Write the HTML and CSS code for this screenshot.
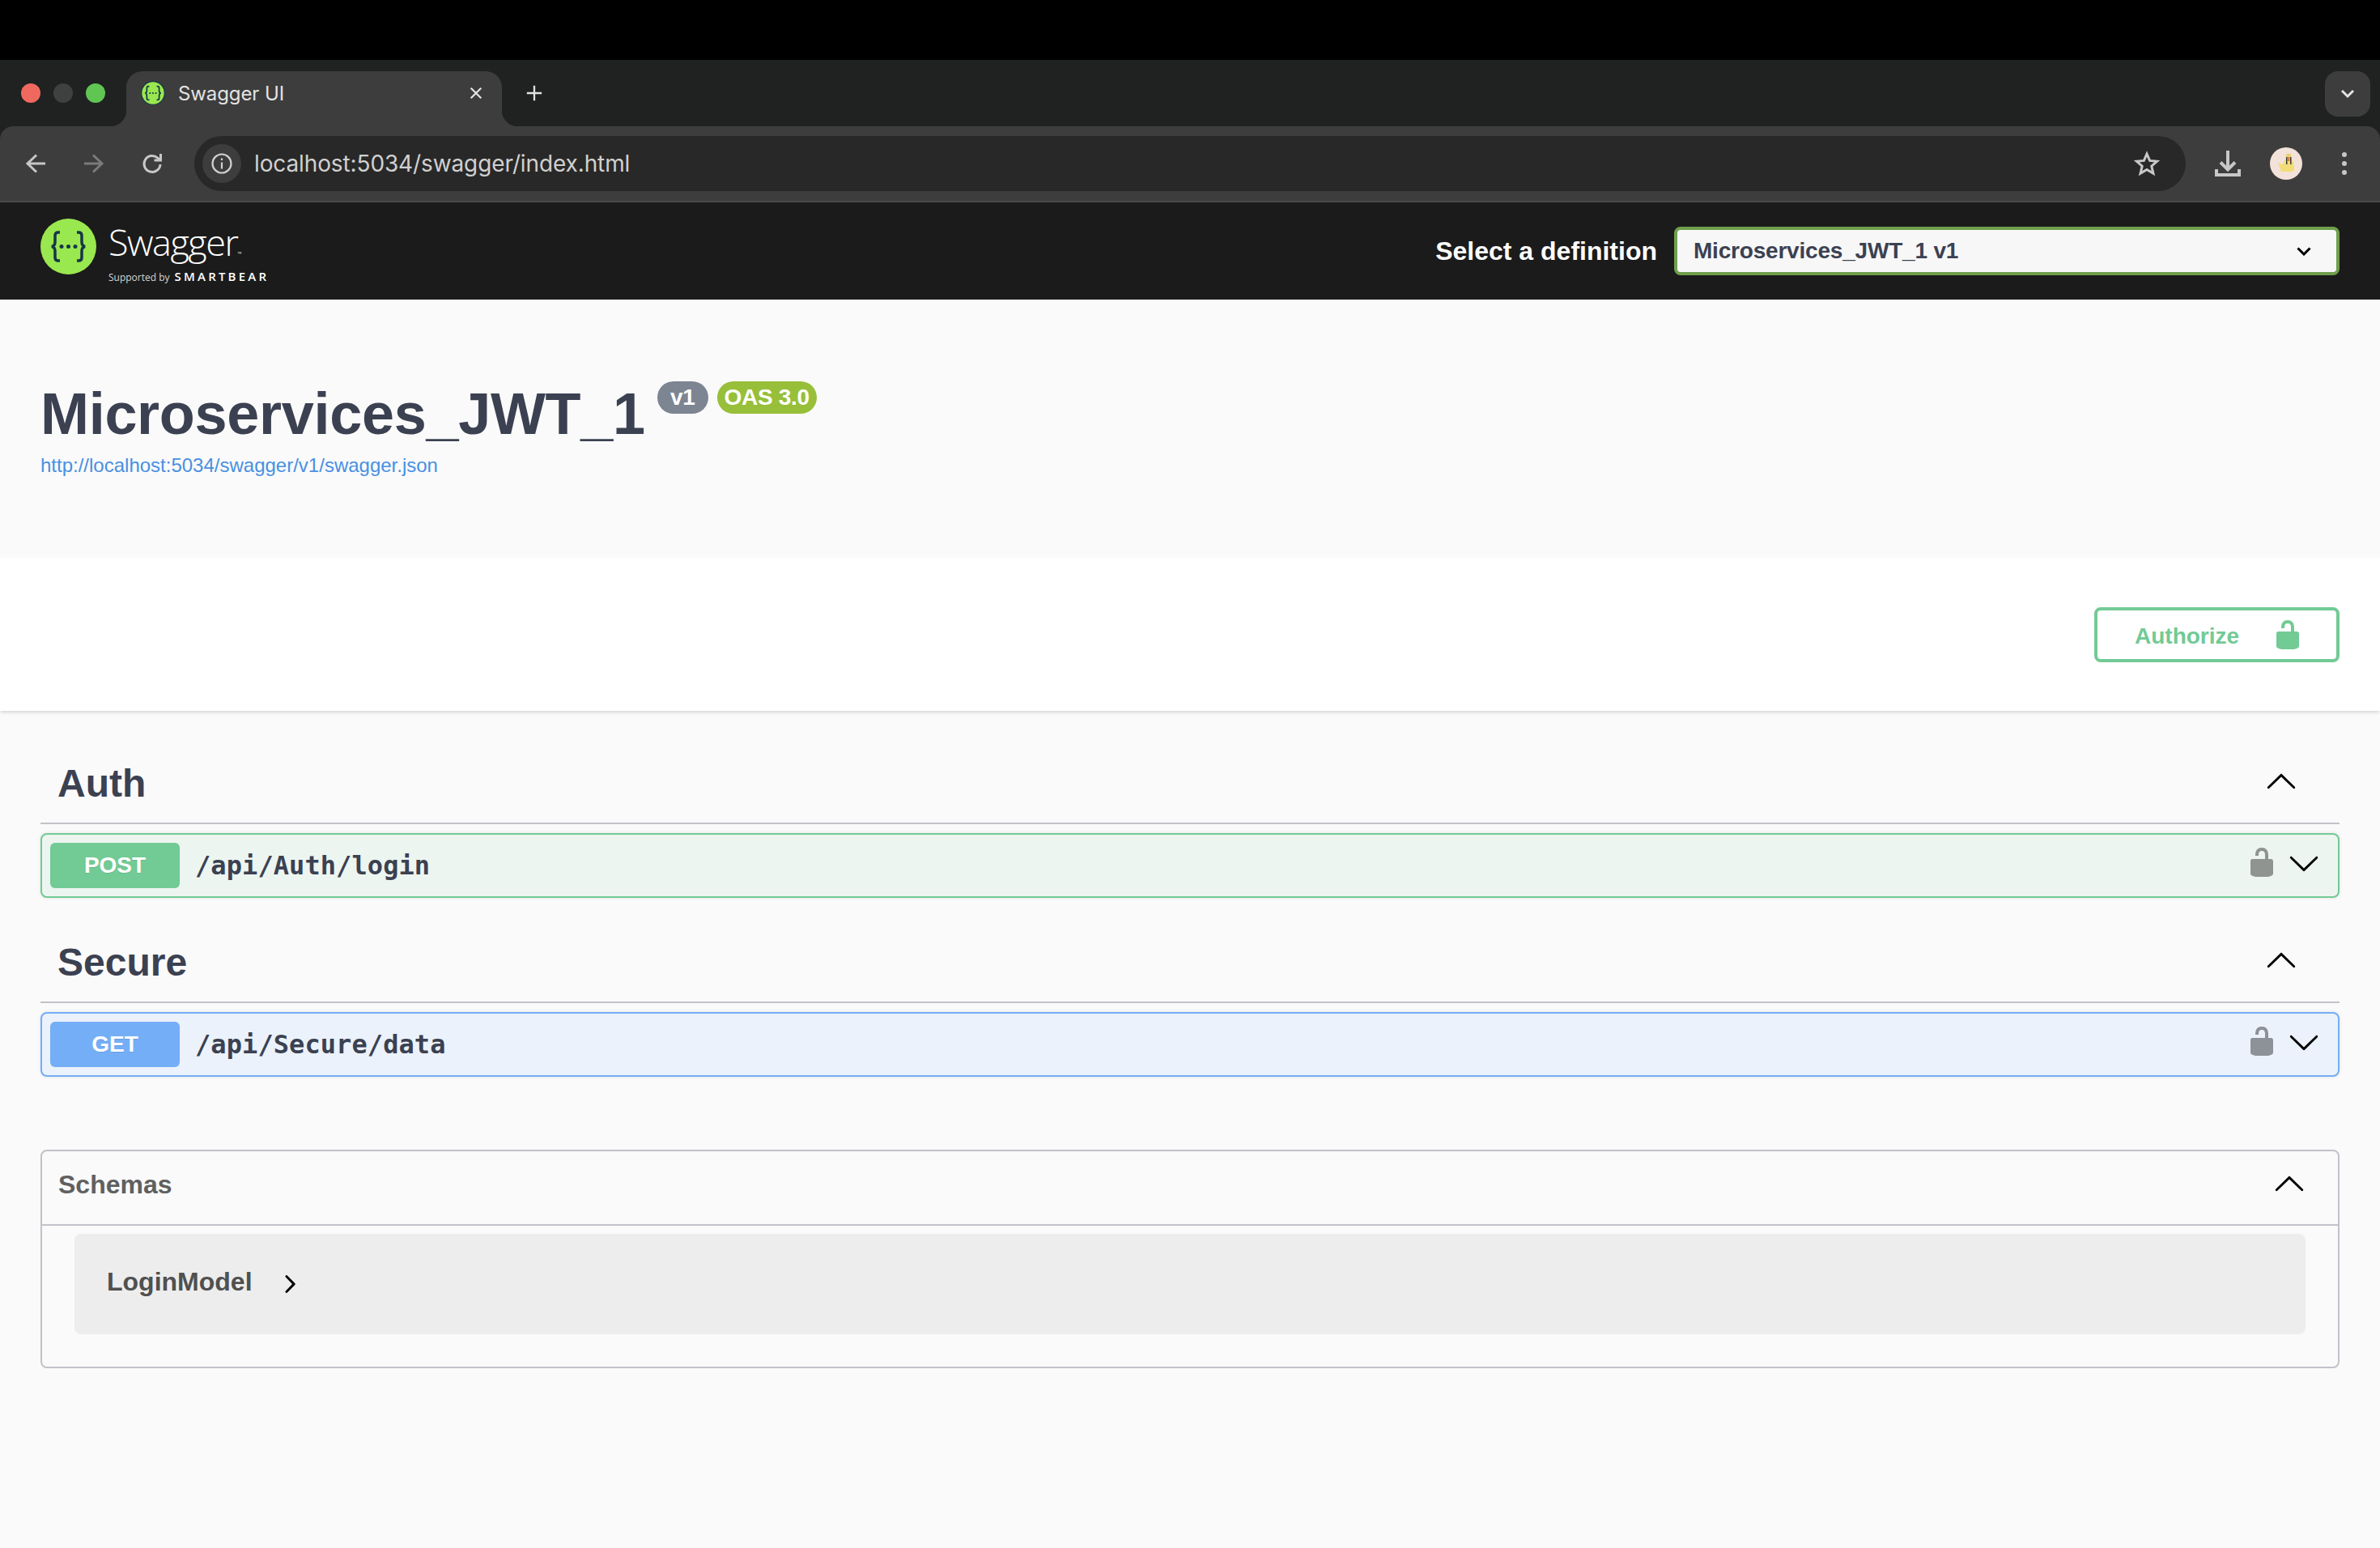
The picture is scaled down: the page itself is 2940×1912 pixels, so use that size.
FILE: index.html
```html
<!DOCTYPE html>
<html lang="en">
<head>
    <meta charset="UTF-8">
    <title>Swagger UI</title>
    <link rel="stylesheet" href="styles.css">
</head>
<body>
    <div class="screen-top"></div>

    <div class="tabstrip">
        <div class="lights">
            <span class="light red"></span>
            <span class="light gray"></span>
            <span class="light green"></span>
        </div>
        <div class="tab">
            <svg class="favicon" viewBox="0 0 69 69">
                <circle cx="34.5" cy="34.5" r="33" fill="#9ae84f" stroke="#173647" stroke-width="3"/>
                <path class="brace" d="M24 15h-3c-3 0-4 2-4 5v8c0 3-2 6-5 6.500 3 .5 5 3.500 5 6.500v8c0 3 1 5 4 5h3"/>
                <path class="brace" d="M45 15h3c3 0 4 2 4 5v8c0 3 2 6 5 6.500-3 .5-5 3.500-5 6.500v8c0 3-1 5-4 5h-3"/>
                <circle cx="26" cy="34.500" r="2.500" fill="#173647"/>
                <circle cx="34.500" cy="34.500" r="2.500" fill="#173647"/>
                <circle cx="43" cy="34.500" r="2.500" fill="#173647"/>
            </svg>
            <span class="tab-title">Swagger UI</span>
            <svg class="tab-close" viewBox="0 0 20 20"><path d="M3 3l14 14M17 3L3 17"/></svg>
        </div>
        <svg class="new-tab" viewBox="0 0 24 24"><path d="M12 2v20M2 12h20"/></svg>
        <div class="tab-menu">
            <svg viewBox="0 0 18 12"><path d="M2 2l7 7 7-7"/></svg>
        </div>
    </div>

    <div class="toolbar-wrap">
        <div class="toolbar">
            <svg class="nav-icon" viewBox="0 0 24 24"><path d="M24 12H2M13 1.500L2 12l11 10.500"/></svg>
            <svg class="nav-icon dim" viewBox="0 0 24 24"><path d="M0 12h22M11 1.500L22 12 11 22.500"/></svg>
            <svg class="nav-icon reload" viewBox="0 0 24 24"><path d="M22 13a10 10 0 1 1-3.500-8.200L22 8"/><path class="fill" d="M14.500 9.500H24V0h-3v6.500h-6.500z"/></svg>
            <div class="address">
                <span class="site-info">
                    <svg viewBox="0 0 28 28"><circle cx="14" cy="14" r="11.500"/><path d="M14 12.500v8M14 7.500v2.500"/></svg>
                </span>
                <span class="url">localhost:5034/swagger/index.html</span>
                <svg class="star" viewBox="0 0 32 32"><path d="M16 4l3.600 8.400 9.100.8-6.900 6 2.100 8.900-7.900-4.700-7.900 4.700 2.100-8.900-6.900-6 9.100-.8z"/></svg>
            </div>
            <svg class="download" viewBox="0 0 32 32"><path d="M16 0v23M7 14.500l9 9 9-9M2 23v7h28v-7"/></svg>
            <svg class="avatar" viewBox="0 0 40 40">
                <circle cx="20" cy="20" r="20" fill="#f3e2da"/>
                <path d="M10 19l6 2 3-7 7 0 3 4 1.500 9-2.500 3-14 0z" fill="#f2dc78"/>
                <circle cx="23" cy="11" r="3.500" fill="#e9d173"/>
                <path d="M20 12h1.500v9H20zM25 12h1.500v9H25z" fill="#3a3a3a"/>
                <rect x="22" y="12" width="2.500" height="5" fill="#d9843f"/>
            </svg>
            <svg class="more" viewBox="0 0 6 30">
                <circle cx="3" cy="4" r="3"/><circle cx="3" cy="15" r="3"/><circle cx="3" cy="26" r="3"/>
            </svg>
        </div>
    </div>

    <header class="swagger-bar">
        <div class="logo">
            <svg class="logo-mark" viewBox="0 0 69 69">
                <circle cx="34.5" cy="34.500" r="34.500" fill="#9ae84f"/>
                <path class="brace thin" d="M24 17h-2c-3 0-4 2-4 4v8c0 3-2 5-4 5.500 2 .5 4 2.500 4 5.500v8c0 2 1 4 4 4h2"/>
                <path class="brace thin" d="M45 17h2c3 0 4 2 4 4v8c0 3 2 5 4 5.500-2 .5-4 2.500-4 5.500v8c0 2-1 4-4 4h-2"/>
                <circle cx="26" cy="34.500" r="2.500" fill="#173647"/>
                <circle cx="34.500" cy="34.500" r="2.500" fill="#173647"/>
                <circle cx="43" cy="34.500" r="2.500" fill="#173647"/>
            </svg>
            <div class="logo-text">
                <div class="logo-name">Swagger<span class="logo-tm">™</span></div>
                <div class="logo-sub"><span class="supported">Supported by</span><span class="smartbear">SMARTBEAR</span></div>
            </div>
        </div>
        <div class="definition">
            <span class="definition-label">Select a definition</span>
            <div class="definition-select">
                <span>Microservices_JWT_1 v1</span>
                <svg viewBox="0 0 18 11"><path d="M1.500 1.500L9 9l7.500-7.500"/></svg>
            </div>
        </div>
    </header>

    <section class="info">
        <div class="title-row">
            <h1>Microservices_JWT_1</h1>
            <span class="badge version">v1</span>
            <span class="badge oas">OAS 3.0</span>
        </div>
        <a class="spec-link" href="#">http://localhost:5034/swagger/v1/swagger.json</a>
    </section>

    <section class="scheme">
        <button class="authorize">
            <span>Authorize</span>
            <svg viewBox="0 0 20 20"><path d="M15.800 8H14V5.600C14 2.703 12.665 1 10 1 7.334 1 6 2.703 6 5.600V6h2v-.801C8 3.754 8.797 3 10 3c1.203 0 2 .754 2 2.199V8H4c-.553 0-1 .646-1 1.199V17c0 .549.428 1.139.951 1.307l1.197.387C5.672 18.861 6.550 19 7.100 19h5.800c.549 0 1.428-.139 1.951-.307l1.196-.387c.524-.167.953-.757.953-1.306V9.199C17 8.646 16.352 8 15.800 8z"/></svg>
        </button>
    </section>

    <main class="content">
        <div class="tag-head">
            <h2>Auth</h2>
            <svg class="arrow up" viewBox="0 0 20 20"><path d="M17.418 6.109c.272-.268.709-.268.979 0s.271.701 0 .969l-7.908 7.830c-.270.268-.707.268-.979 0l-7.908-7.830c-.270-.268-.270-.701 0-.969.271-.268.709-.268.979 0L10 13.250l7.418-7.141z"/></svg>
        </div>
        <div class="opblock post">
            <span class="method">POST</span>
            <span class="path">/api/Auth/login</span>
            <svg class="op-lock" viewBox="0 0 20 20"><path d="M15.800 8H14V5.600C14 2.703 12.665 1 10 1 7.334 1 6 2.703 6 5.600V6h2v-.801C8 3.754 8.797 3 10 3c1.203 0 2 .754 2 2.199V8H4c-.553 0-1 .646-1 1.199V17c0 .549.428 1.139.951 1.307l1.197.387C5.672 18.861 6.550 19 7.100 19h5.800c.549 0 1.428-.139 1.951-.307l1.196-.387c.524-.167.953-.757.953-1.306V9.199C17 8.646 16.352 8 15.800 8z"/></svg>
            <svg class="arrow op-arrow" viewBox="0 0 20 20"><path d="M17.418 6.109c.272-.268.709-.268.979 0s.271.701 0 .969l-7.908 7.830c-.270.268-.707.268-.979 0l-7.908-7.830c-.270-.268-.270-.701 0-.969.271-.268.709-.268.979 0L10 13.250l7.418-7.141z"/></svg>
        </div>

        <div class="tag-head second">
            <h2>Secure</h2>
            <svg class="arrow up" viewBox="0 0 20 20"><path d="M17.418 6.109c.272-.268.709-.268.979 0s.271.701 0 .969l-7.908 7.830c-.270.268-.707.268-.979 0l-7.908-7.830c-.270-.268-.270-.701 0-.969.271-.268.709-.268.979 0L10 13.250l7.418-7.141z"/></svg>
        </div>
        <div class="opblock get">
            <span class="method">GET</span>
            <span class="path">/api/Secure/data</span>
            <svg class="op-lock" viewBox="0 0 20 20"><path d="M15.800 8H14V5.600C14 2.703 12.665 1 10 1 7.334 1 6 2.703 6 5.600V6h2v-.801C8 3.754 8.797 3 10 3c1.203 0 2 .754 2 2.199V8H4c-.553 0-1 .646-1 1.199V17c0 .549.428 1.139.951 1.307l1.197.387C5.672 18.861 6.550 19 7.100 19h5.800c.549 0 1.428-.139 1.951-.307l1.196-.387c.524-.167.953-.757.953-1.306V9.199C17 8.646 16.352 8 15.800 8z"/></svg>
            <svg class="arrow op-arrow" viewBox="0 0 20 20"><path d="M17.418 6.109c.272-.268.709-.268.979 0s.271.701 0 .969l-7.908 7.830c-.270.268-.707.268-.979 0l-7.908-7.830c-.270-.268-.270-.701 0-.969.271-.268.709-.268.979 0L10 13.250l7.418-7.141z"/></svg>
        </div>

        <div class="schemas">
            <div class="schemas-head">
                <h4>Schemas</h4>
                <svg class="arrow up" viewBox="0 0 20 20"><path d="M17.418 6.109c.272-.268.709-.268.979 0s.271.701 0 .969l-7.908 7.830c-.270.268-.707.268-.979 0l-7.908-7.830c-.270-.268-.270-.701 0-.969.271-.268.709-.268.979 0L10 13.250l7.418-7.141z"/></svg>
            </div>
            <div class="model">
                <span class="model-name">LoginModel</span>
                <svg class="model-arrow" viewBox="0 0 20 20"><path d="M13.250 10L6.109 2.580c-.268-.270-.268-.707 0-.979.268-.270.701-.270.969 0l7.830 7.908c.268.271.268.709 0 .979l-7.830 7.908c-.268.271-.701.270-.969 0-.268-.269-.268-.707 0-.979L13.250 10z"/></svg>
            </div>
        </div>
    </main>
</body>
</html>
```

FILE: styles.css
```css
* {
    box-sizing: border-box;
}
body {
    margin: 0;
    min-height: 1912px;
    background: #fafafa;
    font-family: "Liberation Sans", Arial, sans-serif;
    color: #3b4151;
}
h1, h2, h4 {
    margin: 0;
}

/* browser chrome */
.screen-top {
    height: 74px;
    background: #000;
}
.tabstrip {
    height: 82px;
    background: #1f2221;
    display: flex;
    align-items: flex-start;
    font-family: Inter, "Liberation Sans", sans-serif;
}
.lights {
    width: 156px;
    height: 82px;
    padding: 0 0 0 26px;
    display: flex;
    align-items: center;
    gap: 16px;
    flex-shrink: 0;
}
.light {
    width: 24px;
    height: 24px;
    border-radius: 50%;
}
.red { background: #f0695f; }
.gray { background: #3f4140; }
.green { background: #61c554; }
.tab {
    position: relative;
    margin-top: 14px;
    width: 464px;
    height: 68px;
    background: #3d3d3d;
    border-radius: 20px 20px 0 0;
    display: flex;
    align-items: center;
    padding: 0 22px 14px 18px;
    flex-shrink: 0;
}
.tab::before, .tab::after {
    content: "";
    position: absolute;
    bottom: 0;
    width: 20px;
    height: 20px;
}
.tab::before {
    left: -20px;
    background: radial-gradient(circle at 0 0, transparent 20px, #3d3d3d 20.500px);
}
.tab::after {
    right: -20px;
    background: radial-gradient(circle at 100% 0, transparent 20px, #3d3d3d 20.500px);
}
.favicon {
    width: 30px;
    height: 30px;
    flex-shrink: 0;
}
.brace {
    fill: none;
    stroke: #173647;
    stroke-width: 4;
}
.brace.thin {
    stroke-width: 3.500;
}
.tab-title {
    margin-left: 16px;
    font-size: 24px;
    letter-spacing: -0.100px;
    color: #e3e3e3;
    flex: 1;
}
.tab-close {
    width: 18px;
    height: 18px;
    margin-right: 1px;
}
.tab-close path, .new-tab path {
    fill: none;
    stroke: #e3e3e3;
    stroke-width: 2.500;
}
.new-tab {
    width: 22px;
    height: 22px;
    margin: 30px 0 0 29px;
}
.tab-menu {
    margin: 14px 12px 0 auto;
    width: 56px;
    height: 56px;
    border-radius: 16px;
    background: #3d3d3d;
    display: flex;
    align-items: center;
    justify-content: center;
}
.tab-menu svg {
    width: 18px;
    height: 12px;
    fill: none;
    stroke: #e3e3e3;
    stroke-width: 3;
}
.toolbar-wrap {
    background: #1f2221;
}
.toolbar {
    height: 94px;
    background: #3d3d3d;
    border-bottom: 2px solid #4a4a4a;
    border-radius: 16px 16px 0 0;
    display: flex;
    align-items: center;
    padding-left: 32px;
    font-family: Inter, "Liberation Sans", sans-serif;
}
.nav-icon {
    width: 24px;
    height: 24px;
    margin-right: 48px;
    fill: none;
    stroke: #c7c7c7;
    stroke-width: 3;
    flex-shrink: 0;
    overflow: visible;
}
.nav-icon.dim {
    stroke: #7b7b7b;
}
.nav-icon.reload {
    margin-right: 0;
}
.nav-icon .fill {
    fill: #c7c7c7;
    stroke: none;
}
.address {
    margin-left: 40px;
    width: 2460px;
    height: 68px;
    background: #282828;
    border-radius: 34px;
    display: flex;
    align-items: center;
    padding-left: 10px;
}
.site-info {
    width: 48px;
    height: 48px;
    border-radius: 50%;
    background: #3d3d3d;
    display: flex;
    align-items: center;
    justify-content: center;
}
.site-info svg {
    width: 28px;
    height: 28px;
    fill: none;
    stroke: #d0d0d0;
    stroke-width: 2.200;
}
.url {
    margin-left: 16px;
    font-size: 28px;
    letter-spacing: -0.120px;
    color: #d0d0d0;
    flex: 1;
}
.star {
    width: 32px;
    height: 32px;
    margin-right: 32px;
    fill: none;
    stroke: #c7c7c7;
    stroke-width: 3;
}
.download {
    width: 32px;
    height: 32px;
    margin-left: 36px;
    fill: none;
    stroke: #c7c7c7;
    stroke-width: 4;
}
.avatar {
    width: 40px;
    height: 40px;
    margin-left: 36px;
}
.more {
    width: 6px;
    height: 30px;
    margin-left: 49px;
    fill: #c7c7c7;
}

/* swagger header */
.swagger-bar {
    height: 120px;
    background: #1b1b1b;
    padding: 0 50px;
    display: flex;
    align-items: center;
    justify-content: space-between;
}
.logo {
    height: 69px;
    margin-bottom: 11px;
    display: flex;
    align-items: flex-start;
    gap: 15px;
}
.logo-mark {
    width: 69px;
    height: 69px;
}
.logo-text {
    color: #fff;
    font-family: "Open Sans", sans-serif;
}
.logo-name {
    font-size: 45px;
    font-weight: 300;
    line-height: 50px;
    letter-spacing: -1.500px;
    margin-top: 4px;
}
.logo-tm {
    font-size: 7px;
    letter-spacing: 0;
    line-height: 0;
}
.logo-sub {
    display: flex;
    align-items: baseline;
    gap: 6px;
    margin-top: 7px;
    line-height: 20px;
}
.supported {
    font-size: 12px;
    color: #d5d5d5;
}
.smartbear {
    font-size: 15px;
    font-weight: 600;
    letter-spacing: 3.200px;
}
.definition {
    display: flex;
    align-items: center;
    gap: 21px;
}
.definition-label {
    font-size: 32px;
    font-weight: bold;
    color: #fff;
}
.definition-select {
    width: 822px;
    height: 60px;
    background: #f7f7f7;
    border: 4px solid #6f9f4b;
    border-radius: 8px;
    display: flex;
    align-items: center;
    justify-content: space-between;
    padding: 0 31px 0 20px;
    font-size: 28px;
    font-weight: bold;
    letter-spacing: -0.200px;
    color: #3b4151;
}
.definition-select svg {
    width: 18px;
    height: 11px;
    fill: none;
    stroke: #000;
    stroke-width: 3;
}

/* info */
.info {
    height: 319px;
    padding: 105px 50px 0;
}
.title-row {
    display: flex;
    align-items: flex-start;
}
h1 {
    font-size: 72px;
    line-height: 72px;
    font-weight: bold;
    letter-spacing: -0.300px;
}
.badge {
    height: 40px;
    margin-top: -4px;
    border-radius: 20px;
    color: #fff;
    font-size: 28px;
    font-weight: bold;
    letter-spacing: -0.300px;
    display: flex;
    align-items: center;
    justify-content: center;
}
.version {
    width: 63px;
    margin-left: 15px;
    background: #7d8492;
}
.oas {
    width: 123px;
    margin-left: 11px;
    background: #97bf3a;
}
.spec-link {
    display: block;
    margin-top: 13px;
    font-size: 24px;
    line-height: 30px;
    color: #4990e2;
    text-decoration: none;
}

/* authorize */
.scheme {
    height: 189px;
    background: #fff;
    box-shadow: 0 3px 4px -1px rgba(0, 0, 0, 0.15);
    padding: 61px 50px 0;
    display: flex;
    justify-content: flex-end;
    align-items: flex-start;
}
.authorize {
    width: 303px;
    height: 68px;
    background: transparent;
    border: 4px solid #72ca95;
    border-radius: 8px;
    color: #72ca95;
    font-family: inherit;
    font-size: 28px;
    font-weight: bold;
    display: flex;
    align-items: center;
    padding: 0 0 0 46px;
}
.authorize span {
    margin-top: 3px;
}
.authorize svg {
    width: 40px;
    height: 40px;
    margin-left: 40px;
    fill: #72ca95;
}

/* operations */
.content {
    padding: 48px 50px 0;
}
.tag-head {
    height: 92px;
    border-bottom: 2px solid #c2c2c9;
    display: flex;
    align-items: center;
    justify-content: space-between;
    padding: 0 52px 10px 21px;
}
.tag-head.second {
    margin-top: 38px;
}
h2 {
    font-size: 48px;
    font-weight: bold;
    line-height: 60px;
    margin-top: 3px;
}
.arrow {
    width: 40px;
    height: 40px;
    fill: #000;
}
.arrow.up {
    transform: rotate(180deg);
}
.tag-head .arrow {
    margin-top: -1px;
}
.opblock {
    margin-top: 11px;
    height: 80px;
    border: 2px solid;
    border-radius: 8px;
    box-shadow: 0 0 4px rgba(0, 0, 0, 0.1);
    display: flex;
    align-items: center;
    padding: 0 22px 0 10px;
}
.post {
    background: #ecf5f0;
    border-color: #72ca95;
}
.get {
    background: #ebf2fb;
    border-color: #74aef6;
}
.method {
    width: 160px;
    height: 56px;
    border-radius: 6px;
    color: #fff;
    font-size: 28px;
    font-weight: bold;
    display: flex;
    align-items: center;
    justify-content: center;
    text-shadow: 0 1px 0 rgba(0, 0, 0, 0.1);
}
.post .method { background: #72ca95; }
.get .method { background: #74aef6; }
.path {
    margin-left: 19px;
    font-family: "DejaVu Sans Mono", monospace;
    font-size: 32px;
    font-weight: bold;
    letter-spacing: 0.080px;
    flex: 1;
}
.op-lock {
    width: 40px;
    height: 40px;
    margin: 0 12px 8px 0;
    fill: #909490;
}
.get .op-lock {
    fill: #8d9298;
}
.op-arrow {
    margin-bottom: 6px;
}

/* schemas */
.schemas {
    margin-top: 90px;
    height: 270px;
    border: 2px solid #c2c2c9;
    border-radius: 8px;
}
.schemas-head {
    height: 92px;
    border-bottom: 2px solid #c2c2c9;
    display: flex;
    align-items: center;
    justify-content: space-between;
    padding: 0 40px 8px 20px;
}
h4 {
    font-size: 32px;
    font-weight: bold;
    color: #606060;
}
.model {
    margin: 10px 40px 0;
    height: 124px;
    background: #ededed;
    border-radius: 8px;
    display: flex;
    align-items: center;
    padding-left: 40px;
}
.model-name {
    font-size: 32px;
    font-weight: bold;
    color: #505050;
    margin-top: -6px;
}
.model-arrow {
    width: 24px;
    height: 24px;
    margin-left: 34px;
    fill: #000;
    stroke: #000;
    stroke-width: 1;
}
```
